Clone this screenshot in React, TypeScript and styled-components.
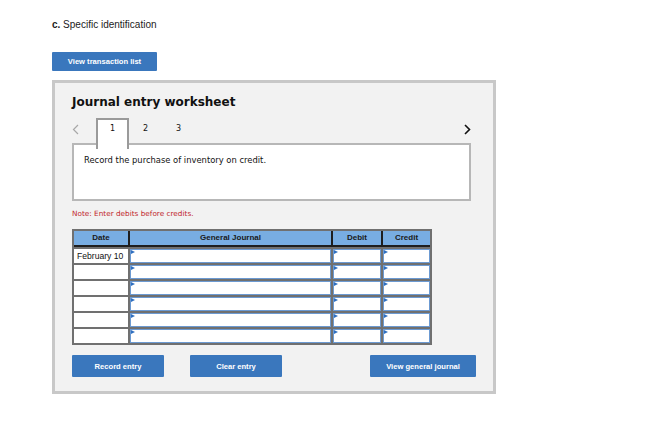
import React from 'react'
import styled, { createGlobalStyle } from 'styled-components'

const GlobalStyle = createGlobalStyle`
  html, body {
    margin: 0;
    padding: 0;
    background: #ffffff;
  }
  body {
    font-family: "Liberation Sans", Arial, sans-serif;
    color: #222;
  }
`

const Page = styled.div`
  padding: 19px 0 0 52px;
  display: flex;
  flex-direction: column;
  align-items: flex-start;
`

const Heading = styled.div`
  font-size: 10px;
  line-height: 12px;
  color: #222;
  b {
    font-weight: 700;
  }
`

const BlueButton = styled.button<{ $w: number; $h?: number }>`
  width: ${(p) => p.$w}px;
  height: ${(p) => p.$h ?? 22}px;
  background: #3a77bd;
  color: #fff;
  border: none;
  border-radius: 1px;
  font-family: "Liberation Sans", Arial, sans-serif;
  font-weight: 700;
  font-size: 7.6px;
  padding: 0;
  cursor: pointer;
`

const TopButton = styled(BlueButton)`
  margin-top: 21px;
`

const Panel = styled.div`
  margin-top: 9px;
  width: 421px;
  height: 297px;
  border: 3px solid #c8c8c8;
  background: #f2f2f2;
  padding: 11px 0 0 17px;
  box-sizing: content-box;
  display: flex;
  flex-direction: column;
`

const Title = styled.div`
  font-family: "DejaVu Sans", Verdana, sans-serif;
  font-weight: 700;
  font-size: 12px;
  line-height: 16px;
  color: #111;
`

const TabRow = styled.div`
  margin-top: 8px;
  width: 399px;
  height: 27px;
  display: flex;
  align-items: flex-start;
  position: relative;
  z-index: 1;
  margin-bottom: -2px;
`

const Arrow = styled.div`
  width: 24px;
  height: 25px;
  display: flex;
  align-items: flex-start;
  svg {
    display: block;
    margin-top: 6px;
  }
`

const NextArrow = styled(Arrow)`
  margin-left: auto;
  width: auto;
`

const Tab = styled.div<{ $active?: boolean }>`
  width: ${(p) => (p.$active ? 29 : 33)}px;
  height: ${(p) => (p.$active ? 25 : 27)}px;
  border: ${(p) => (p.$active ? '2px solid #9a9a9a' : 'none')};
  border-bottom: none;
  background: ${(p) => (p.$active ? '#fff' : 'transparent')};
  font-family: "DejaVu Sans", Verdana, sans-serif;
  font-size: 8px;
  line-height: 10px;
  color: #111;
  text-align: center;
  padding-top: ${(p) => (p.$active ? 4 : 6)}px;
  box-sizing: content-box;
`

const Prompt = styled.div`
  width: 375px;
  height: 34px;
  border: 2px solid #b7b7b7;
  background: #fff;
  padding: 10px;
  box-sizing: content-box;
  font-family: "DejaVu Sans", Verdana, sans-serif;
  font-size: 8.4px;
  line-height: 10px;
  color: #111;
`

const Note = styled.div`
  margin-top: 8px;
  font-family: "DejaVu Sans", Verdana, sans-serif;
  font-size: 7.3px;
  line-height: 10px;
  color: #c1272d;
`

const Table = styled.div`
  margin-top: 10px;
  width: 356px;
  border: 2px solid #707070;
  background: #707070;
  display: flex;
  flex-direction: column;
  gap: 2px;
`

const cols = '54px 201px 48px 47px'

const HeadRow = styled.div`
  display: grid;
  grid-template-columns: ${cols};
  column-gap: 2px;
  background: #1e1e1e;
  padding-bottom: 2px;
`

const HeadCell = styled.div`
  height: 14px;
  background: #78ade2;
  font-weight: 700;
  font-size: 8px;
  line-height: 14px;
  text-align: center;
  color: #1a1a1a;
`

const BodyRow = styled.div`
  display: grid;
  grid-template-columns: ${cols};
  column-gap: 2px;
  height: 14px;
`

const DateCell = styled.div`
  background: #fff;
  font-size: 8.6px;
  line-height: 14px;
  color: #111;
  padding-left: 3px;
  white-space: nowrap;
`

const InputCell = styled.div`
  position: relative;
  background: #fff;
  border: 1.5px solid #6c9ad2;
  box-sizing: border-box;
  &::before {
    content: '';
    position: absolute;
    left: 0;
    top: 0;
    border-style: solid;
    border-width: 2px 0 2px 4px;
    border-color: transparent transparent transparent #2f6fc0;
  }
`

const ButtonRow = styled.div`
  margin-top: 10px;
  width: 404px;
  display: flex;
  align-items: center;
  gap: 26px;
`

const Spacer = styled.div`
  flex: 1;
`

const rows = ['February 10', '', '', '', '', '']

export default function App() {
  return (
    <>
      <GlobalStyle />
      <Page>
        <Heading>
          <b>c.</b> Specific identification
        </Heading>
        <TopButton $w={105} $h={19}>
          View transaction list
        </TopButton>
        <Panel>
          <Title>Journal entry worksheet</Title>
          <TabRow>
            <Arrow>
              <svg width="7" height="11" viewBox="0 0 7 11">
                <path d="M6 1 L1.5 5.5 L6 10" fill="none" stroke="#a8a8a8" strokeWidth="1.2" />
              </svg>
            </Arrow>
            <Tab $active>1</Tab>
            <Tab>2</Tab>
            <Tab>3</Tab>
            <NextArrow>
              <svg width="7" height="11" viewBox="0 0 7 11">
                <path d="M1 1 L5.5 5.5 L1 10" fill="none" stroke="#111" strokeWidth="1.6" />
              </svg>
            </NextArrow>
          </TabRow>
          <Prompt>Record the purchase of inventory on credit.</Prompt>
          <Note>Note: Enter debits before credits.</Note>
          <Table>
            <HeadRow>
              <HeadCell>Date</HeadCell>
              <HeadCell>General Journal</HeadCell>
              <HeadCell>Debit</HeadCell>
              <HeadCell>Credit</HeadCell>
            </HeadRow>
            {rows.map((d, i) => (
              <BodyRow key={i}>
                <DateCell>{d}</DateCell>
                <InputCell />
                <InputCell />
                <InputCell />
              </BodyRow>
            ))}
          </Table>
          <ButtonRow>
            <BlueButton $w={92}>Record entry</BlueButton>
            <BlueButton $w={92}>Clear entry</BlueButton>
            <Spacer />
            <BlueButton $w={106}>View general journal</BlueButton>
          </ButtonRow>
        </Panel>
      </Page>
    </>
  )
}
